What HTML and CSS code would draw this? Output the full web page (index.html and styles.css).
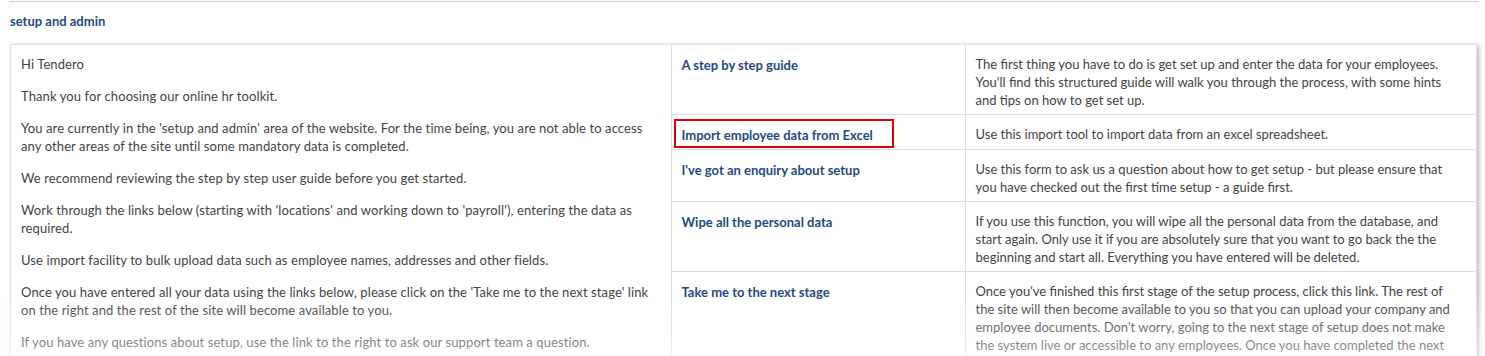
FILE: index.html
```html
<!DOCTYPE html>
<html lang="en">
<head>
<meta charset="utf-8">
<title>setup and admin</title>
<link rel="stylesheet" href="styles.css">
</head>
<body>
<div class="page">
  <div class="section-head">
    <h2 class="section-title">setup and admin</h2>
  </div>
  <div class="panel">
    <table class="setup-table">
      <colgroup>
        <col class="col-intro">
        <col class="col-link">
        <col class="col-desc">
      </colgroup>
      <tbody>
        <tr>
          <td class="intro" rowspan="5">
            <p>Hi Tendero</p>
            <p>Thank you for choosing our online hr toolkit.</p>
            <p>You are currently in the 'setup and admin' area of the website. For the time being, you are not able to access<br>any other areas of the site until some mandatory data is completed.</p>
            <p>We recommend reviewing the step by step user guide before you get started.</p>
            <p>Work through the links below (starting with 'locations' and working down to 'payroll'), entering the data as<br>required.</p>
            <p>Use import facility to bulk upload data such as employee names, addresses and other fields.</p>
            <p>Once you have entered all your data using the links below, please click on the 'Take me to the next stage' link<br>on the right and the rest of the site will become available to you.</p>
            <p>If you have any questions about setup, use the link to the right to ask our support team a question.</p>
          </td>
          <td class="link-cell"><a href="#" class="action">A step by step guide</a></td>
          <td class="desc">The first thing you have to do is get set up and enter the data for your employees.<br>You'll find this structured guide will walk you through the process, with some hints<br>and tips on how to get set up.</td>
        </tr>
        <tr>
          <td class="link-cell"><a href="#" class="action highlighted">Import employee data from Excel</a></td>
          <td class="desc">Use this import tool to import data from an excel spreadsheet.</td>
        </tr>
        <tr>
          <td class="link-cell"><a href="#" class="action">I've got an enquiry about setup</a></td>
          <td class="desc">Use this form to ask us a question about how to get setup - but please ensure that<br>you have checked out the first time setup - a guide first.</td>
        </tr>
        <tr>
          <td class="link-cell"><a href="#" class="action">Wipe all the personal data</a></td>
          <td class="desc">If you use this function, you will wipe all the personal data from the database, and<br>start again. Only use it if you are absolutely sure that you want to go back the the<br>beginning and start all. Everything you have entered will be deleted.</td>
        </tr>
        <tr>
          <td class="link-cell"><a href="#" class="action">Take me to the next stage</a></td>
          <td class="desc">Once you've finished this first stage of the setup process, click this link. The rest of<br>the site will then become available to you so that you can upload your company and<br>employee documents. Don't worry, going to the next stage of setup does not make<br>the system live or accessible to any employees. Once you have completed the next<br>stage you will be able to make the system live.</td>
        </tr>
      </tbody>
    </table>
  </div>
</div>
<div class="fade"></div>
</body>
</html>
```

FILE: styles.css
```css
html, body {
  margin: 0;
  padding: 0;
  background: #ffffff;
}

body {
  font-family: "Lato", "Liberation Sans", sans-serif;
  color: #444444;
  overflow: hidden;
}

.page {
  margin-left: 9px;
  width: 1470px;
  padding-top: 1px;
}

.section-head {
  border-top: 1px solid #cfcfcf;
  padding: 11px 0 0 1px;
  height: 31px;
}

.section-title {
  margin: 0;
  font-size: 13px;
  line-height: 16px;
  font-weight: bold;
  color: #1f4a86;
  font-family: "Lato", "Liberation Sans", sans-serif;
}

.panel {
  margin: 0 2px 0 1px;
  border: 1px solid #e2e2e2;
  box-shadow: 2px 1px 4px rgba(0, 0, 0, 0.28);
  background: #ffffff;
}

.setup-table {
  width: 100%;
  border-collapse: collapse;
  table-layout: fixed;
}

.col-intro { width: 660px; }
.col-link { width: 294px; }
.col-desc { width: auto; }

.setup-table td {
  vertical-align: top;
  padding: 10px 10px 5px;
  line-height: 18px;
}

.intro {
  border-right: 1px solid #dddddd;
  font-family: "Lato", "Liberation Sans", sans-serif;
  font-size: 13px;
  letter-spacing: 0.1px;
  color: #444444;
  white-space: nowrap;
}

.intro p {
  margin: 0 0 14px;
}

.link-cell,
.desc {
  border-bottom: 1px solid #dddddd;
}

.link-cell {
  border-right: 1px solid #dddddd;
}

.desc {
  font-size: 13px;
  white-space: nowrap;
  color: #444444;
}

.action {
  position: relative;
  display: inline-block;
  font-size: 13px;
  font-weight: bold;
  color: #1f4a86;
  text-decoration: none;
}

.highlighted::after {
  content: "";
  position: absolute;
  left: -8px;
  top: -7px;
  width: 220px;
  height: 29px;
  box-sizing: border-box;
  border: 2px solid #e00000;
}

.fade {
  position: fixed;
  left: 0;
  right: 0;
  bottom: 0;
  height: 60px;
  background: linear-gradient(to bottom, rgba(255, 255, 255, 0), rgba(255, 255, 255, 0.45));
  pointer-events: none;
}
```
